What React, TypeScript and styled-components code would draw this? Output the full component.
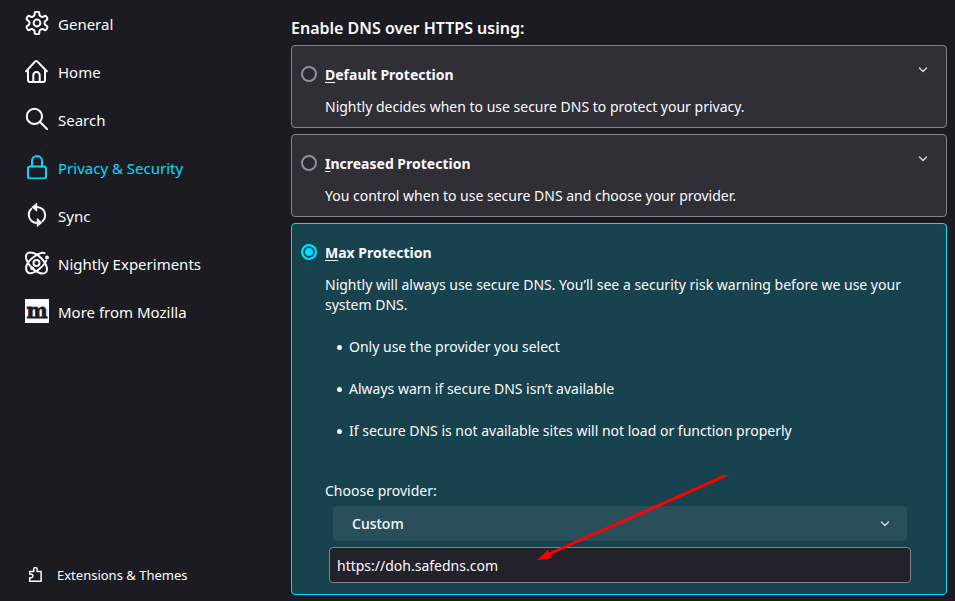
import React from "react";
import styled, { createGlobalStyle } from "styled-components";

const GlobalStyle = createGlobalStyle`
  *, *::before, *::after { box-sizing: border-box; }
  body {
    margin: 0;
    background: #1c1b22;
    color: #fbfbfe;
    font-family: "Noto Sans", "Open Sans", sans-serif;
    font-size: 14px;
    line-height: 20px;
  }
  input, select { font: inherit; color: inherit; }
`;

const Page = styled.div`
  display: grid;
  grid-template-columns: 291px 1fr;
  min-height: 100vh;
`;

const Sidebar = styled.nav`
  display: flex;
  flex-direction: column;
  justify-content: space-between;
  padding: 0 24px 2px 25px;
`;

const NavList = styled.ul`
  list-style: none;
  margin: 0;
  padding: 0;
`;

const NavLink = styled.a<{ $active?: boolean }>`
  display: flex;
  align-items: center;
  gap: 9px;
  height: 48px;
  font-size: 15px;
  text-decoration: none;
  color: ${(p) => (p.$active ? "#00ddff" : "#fbfbfe")};

  svg {
    flex: none;
    margin-bottom: 2px;
  }
`;

const FooterLink = styled.a`
  display: flex;
  align-items: center;
  gap: 14px;
  height: 48px;
  padding-left: 2px;
  font-size: 13px;
  text-decoration: none;
  color: #fbfbfe;
`;

const Main = styled.main`
  padding: 17px 8px 6px 0;
`;

const Heading = styled.h2`
  margin: 0 0 6px;
  font-size: 16px;
  line-height: 22px;
  font-weight: 600;
`;

const Options = styled.div`
  display: flex;
  flex-direction: column;
  gap: 6px;
`;

const Card = styled.section<{ $selected?: boolean }>`
  display: grid;
  grid-template-columns: 16px 1fr 16px;
  column-gap: 8px;
  padding: 19px 15px 10px 9px;
  border: 1px solid ${(p) => (p.$selected ? "#00ddff" : "#84838a")};
  border-radius: 4px;
  background: ${(p) => (p.$selected ? "#18424d" : "#302f36")};
`;

const Radio = styled.input`
  appearance: none;
  width: 16px;
  height: 16px;
  margin: 1px 0 0;
  border: 2px solid #8f8f9d;
  border-radius: 50%;
  background: #2b2a33;

  &:checked {
    border-color: #00ddff;
    background: #00ddff;
    box-shadow: inset 0 0 0 2px #12505e;
  }
`;

const Title = styled.label`
  font-size: 14px;
  font-weight: 700;
`;

const AccessKey = styled.span`
  text-decoration: underline;
  text-underline-offset: 2px;
`;

const Expander = styled.button`
  display: flex;
  align-items: center;
  justify-content: center;
  width: 16px;
  height: 16px;
  margin: -3px 0 0;
  padding: 0;
  border: 0;
  background: none;
  color: #d5d5db;
`;

const Body = styled.div`
  grid-column: 2 / -1;
  margin-top: 12px;
`;

const Description = styled.p`
  margin: 0;
`;

const Bullets = styled.ul`
  display: flex;
  flex-direction: column;
  gap: 22px;
  margin: 22px 0 40px;
  padding-left: 12px;
  list-style: none;

  li {
    display: flex;
    align-items: center;
    gap: 7px;
  }

  li::before {
    content: "";
    width: 5px;
    height: 5px;
    border-radius: 50%;
    background: currentColor;
  }
`;

const Provider = styled.div`
  position: relative;
  margin-right: 20px;
  padding-bottom: 1px;
`;

const SelectBox = styled.div`
  display: grid;
  align-items: center;
  margin: 5px 4px 6px 8px;

  > * { grid-area: 1 / 1; }
  svg {
    justify-self: end;
    margin-right: 17px;
    pointer-events: none;
    color: #d5d5db;
  }
`;

const Select = styled.select`
  appearance: none;
  width: 100%;
  height: 35px;
  padding: 1px 40px 0 19px;
  border: 0;
  border-radius: 4px;
  background: #29505a;
  font-weight: 500;
`;

const UrlField = styled.div`
  padding-left: 4px;
`;

const UrlInput = styled.input`
  display: block;
  width: 100%;
  height: 36px;
  padding: 0 7px;
  border: 1px solid #84838a;
  border-radius: 4px;
  background: #23222b;
`;

const Arrow = styled.svg`
  position: absolute;
  left: 212px;
  top: -6px;
  pointer-events: none;
`;

const stroke = {
  fill: "none",
  stroke: "currentColor",
  strokeWidth: 2,
  strokeLinecap: "round" as const,
  strokeLinejoin: "round" as const,
};

const Icon = ({ children }: { children: React.ReactNode }) => (
  <svg width="24" height="24" viewBox="0 0 24 24" aria-hidden="true" {...stroke}>
    {children}
  </svg>
);

const gearOutline = (() => {
  const pts: [number, number][] = [];
  for (let k = 0; k < 6; k++) {
    const corners: [number, number][] = [[-24, 7.6], [-15, 8.6], [-12, 11.6], [12, 11.6], [15, 8.6], [24, 7.6]];
    corners.forEach(([offset, r]) => {
      const a = ((k * 60 - 90 + offset) * Math.PI) / 180;
      pts.push([12 + r * Math.cos(a), 12 + r * Math.sin(a)]);
    });
  }
  const mid = (a: number[], b: number[]) =>
    `${((a[0] + b[0]) / 2).toFixed(2)} ${((a[1] + b[1]) / 2).toFixed(2)}`;
  const start = `M${mid(pts[pts.length - 1], pts[0])}`;
  return (
    start +
    pts
      .map((p, i) => `Q${p[0].toFixed(2)} ${p[1].toFixed(2)} ${mid(p, pts[(i + 1) % pts.length])}`)
      .join("") +
    "Z"
  );
})();

const GearIcon = () => (
  <Icon>
    <path d={gearOutline} />
    <circle cx="12" cy="12" r="3.4" />
  </Icon>
);

const HomeIcon = () => (
  <Icon>
    <path d="M1.2 12.2 10.2 2.4a1.3 1.3 0 0 1 2 0l9.6 9.8M3 11v10a2 2 0 0 0 2 2h13a2 2 0 0 0 2-2V11" />
    <path d="M8.3 22.6v-6.4a3.2 3.2 0 0 1 6.4 0v6.4" />
  </Icon>
);

const SearchIcon = () => (
  <Icon>
    <circle cx="9.4" cy="9.4" r="7.6" />
    <path d="m15 15 7 7" />
  </Icon>
);

const LockIcon = () => (
  <Icon>
    <rect x="3" y="11.6" width="18" height="11.8" rx="2.2" />
    <path d="M7 11.4V6a5 5 0 0 1 10 0v5.4" />
  </Icon>
);

const SyncIcon = () => (
  <Icon>
    <path d="M11.5 4c5 0 8.700 3.400 8.700 8.200 0 2.600-1 4.600-2.600 6M12.500 20c-5 0-8.700-3.400-8.700-8.200 0-2.600 1-4.600 2.600-6" />
    <path d="M11.800.4v7.800L7.200 4.300ZM12.200 15.800v7.800l4.600-3.900Z" fill="currentColor" strokeWidth="0.800" />
  </Icon>
);

const AtomIcon = () => (
  <Icon>
    <g strokeWidth="2">
      <ellipse cx="11.500" cy="12" rx="13.200" ry="6.800" transform="rotate(45 11.500 12)" />
      <path d="M19.500 2.200C15.500.4 3.400 7.800 1.400 14.900c-1 4.200.6 7.500 4.200 7.300 5.300-.4 14.200-8.200 15.600-12.400" />
      <circle cx="11.500" cy="12" r="3" />
    </g>
    <circle cx="22" cy="6.500" r="1.900" fill="currentColor" stroke="none" />
    <circle cx="7.300" cy="17.300" r="1.900" fill="currentColor" stroke="none" />
  </Icon>
);

const MozillaIcon = () => (
  <svg width="24" height="24" viewBox="0 0 24 24" aria-hidden="true">
    <rect width="24" height="24" fill="#fbfbfe" />
    <text
      x="12"
      y="19"
      textAnchor="middle"
      fontFamily="DejaVu Serif, serif"
      fontWeight="700"
      fontSize="20"
      fill="#1c1b22"
      stroke="#1c1b22"
      strokeWidth="0.800"
    >
      m
    </text>
  </svg>
);

const PuzzleIcon = () => (
  <svg width="16" height="16" viewBox="0 0 16 16" aria-hidden="true" {...stroke} strokeWidth="1.500">
    <path d="M2.700 14.300v-3.600h1.500a1.700 1.700 0 0 0 0-3.400H2.700V4.500h4V2.300a1.700 1.700 0 0 1 3.400 0v2.200h4v9.800Z" />
  </svg>
);

const Chevron = () => (
  <svg width="10" height="6" viewBox="0 0 10 6" aria-hidden="true" {...stroke} strokeWidth="1.400">
    <path d="m1.500 1 3.500 3.500L8.500 1" />
  </svg>
);

const navItems = [
  { label: "General", icon: GearIcon },
  { label: "Home", icon: HomeIcon },
  { label: "Search", icon: SearchIcon },
  { label: "Privacy & Security", icon: LockIcon, active: true },
  { label: "Sync", icon: SyncIcon },
  { label: "Nightly Experiments", icon: AtomIcon },
  { label: "More from Mozilla", icon: MozillaIcon },
];

type OptionProps = {
  id: string;
  title: string;
  selected?: boolean;
  children: React.ReactNode;
};

const Option = ({ id, title, selected, children }: OptionProps) => (
  <Card $selected={selected}>
    <Radio type="radio" name="doh" id={id} defaultChecked={selected} />
    <Title htmlFor={id}>
      <AccessKey>{title[0]}</AccessKey>
      {title.slice(1)}
    </Title>
    {!selected && (
      <Expander type="button" aria-label={`Show details for ${title}`}>
        <Chevron />
      </Expander>
    )}
    <Body>{children}</Body>
  </Card>
);

export default function App() {
  return (
    <Page>
      <GlobalStyle />
      <Sidebar>
        <NavList>
          {navItems.map(({ label, icon: ItemIcon, active }) => (
            <li key={label}>
              <NavLink href="#" $active={active} aria-current={active ? "page" : undefined}>
                <ItemIcon />
                {label}
              </NavLink>
            </li>
          ))}
        </NavList>
        <FooterLink href="#">
          <PuzzleIcon />
          Extensions &amp; Themes
        </FooterLink>
      </Sidebar>
      <Main>
        <Heading>Enable DNS over HTTPS using:</Heading>
        <Options>
          <Option id="default" title="Default Protection">
            <Description>Nightly decides when to use secure DNS to protect your privacy.</Description>
          </Option>
          <Option id="increased" title="Increased Protection">
            <Description>You control when to use secure DNS and choose your provider.</Description>
          </Option>
          <Option id="max" title="Max Protection" selected>
            <Description>
              Nightly will always use secure DNS. You’ll see a security risk warning before we use your system DNS.
            </Description>
            <Bullets>
              <li>Only use the provider you select</li>
              <li>Always warn if secure DNS isn’t available</li>
              <li>If secure DNS is not available sites will not load or function properly</li>
            </Bullets>
            <Provider>
              <label htmlFor="provider">Choose provider:</label>
              <SelectBox>
                <Select id="provider" defaultValue="custom">
                  <option value="custom">Custom</option>
                </Select>
                <Chevron />
              </SelectBox>
              <UrlField>
                <UrlInput type="text" aria-label="Custom provider URL" defaultValue="https://doh.safedns.com" />
              </UrlField>
              <Arrow width="192" height="90" viewBox="0 0 192 90" aria-hidden="true">
                <path d="M188 1 12 79" stroke="#ff0000" strokeWidth="3" strokeLinecap="round" />
                <path d="m0 85 11-10 4 8Z" fill="#ff0000" />
              </Arrow>
            </Provider>
          </Option>
        </Options>
      </Main>
    </Page>
  );
}
